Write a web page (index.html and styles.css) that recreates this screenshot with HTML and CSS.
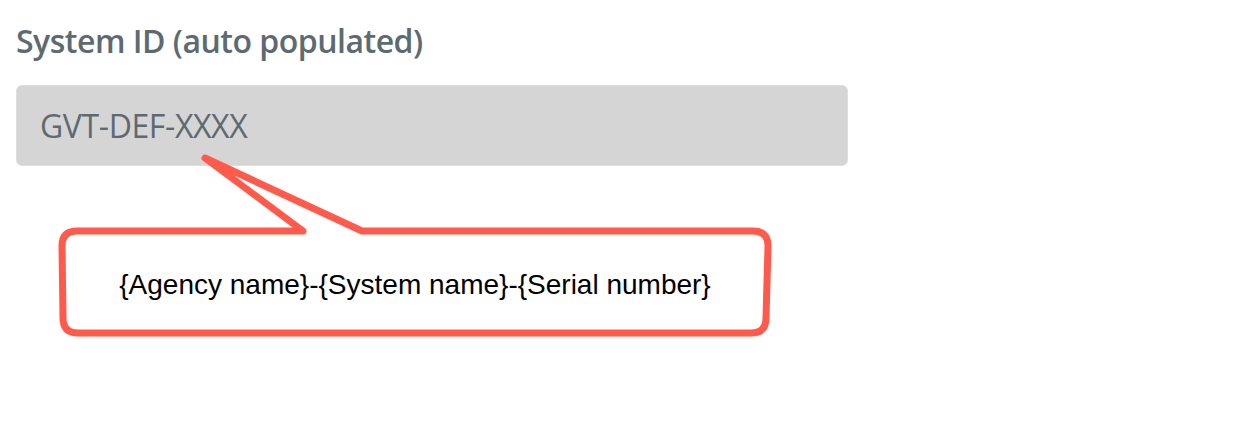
FILE: index.html
```html
<!DOCTYPE html>
<html lang="en">
<head>
  <meta charset="UTF-8" />
  <meta name="viewport" content="width=device-width, initial-scale=1.0" />
  <title>System ID</title>
  <link rel="stylesheet" href="styles.css">
</head>
<body>
  <div class="field">
    <label class="field-label" for="systemId">System ID (auto populated)</label>
    <div class="field-input" id="systemId">GVT-DEF-XXXX</div>
  </div>

  <div class="callout">
    <svg class="callout-shape" width="730" height="200" viewBox="58 140 730 200">
      <path d="M303 231 L205 158 L362 231 L753 231 Q768 231 768 246 L766 318 Q766 333 751 333 L78 333 Q63 333 63 318 L62 246 Q62 231 77 231 Z"
            fill="#fff" stroke="#ff5a4c" stroke-width="7" stroke-linejoin="round" stroke-linecap="round"/>
    </svg>
    <div class="callout-text">{Agency name}-{System name}-{Serial number}</div>
  </div>
</body>
</html>
```

FILE: styles.css
```css
* { box-sizing: border-box; }
body, html {
  margin: 0;
  padding: 0;
  background: #fff;
  font-family: 'Open Sans', sans-serif;
}
.field {
  display: flex;
  flex-direction: column;
  padding: 18px 0 0 16px;
  width: 848px;
}
.field-label {
  font-size: 32px;
  font-weight: 600;
  color: #5d6a72;
  line-height: 46px;
  letter-spacing: -0.5px;
}
.field-input {
  margin-top: 21px;
  height: 81px;
  display: flex;
  align-items: center;
  padding: 0 23px;
  background: #d5d5d5;
  border: 1px solid #dedede;
  border-radius: 6px;
  font-size: 32px;
  color: #5d6a72;
  letter-spacing: -0.4px;
}
.callout {
  position: absolute;
  left: 58px;
  top: 140px;
  width: 730px;
  height: 200px;
}
.callout-shape {
  position: absolute;
  left: 0;
  top: 0;
}
.callout-text {
  position: absolute;
  left: 4px;
  top: 94px;
  width: 706px;
  height: 102px;
  display: flex;
  align-items: center;
  justify-content: center;
  font-family: 'Liberation Sans', Arial, sans-serif;
  font-size: 28px;
  color: #000;
}
```
